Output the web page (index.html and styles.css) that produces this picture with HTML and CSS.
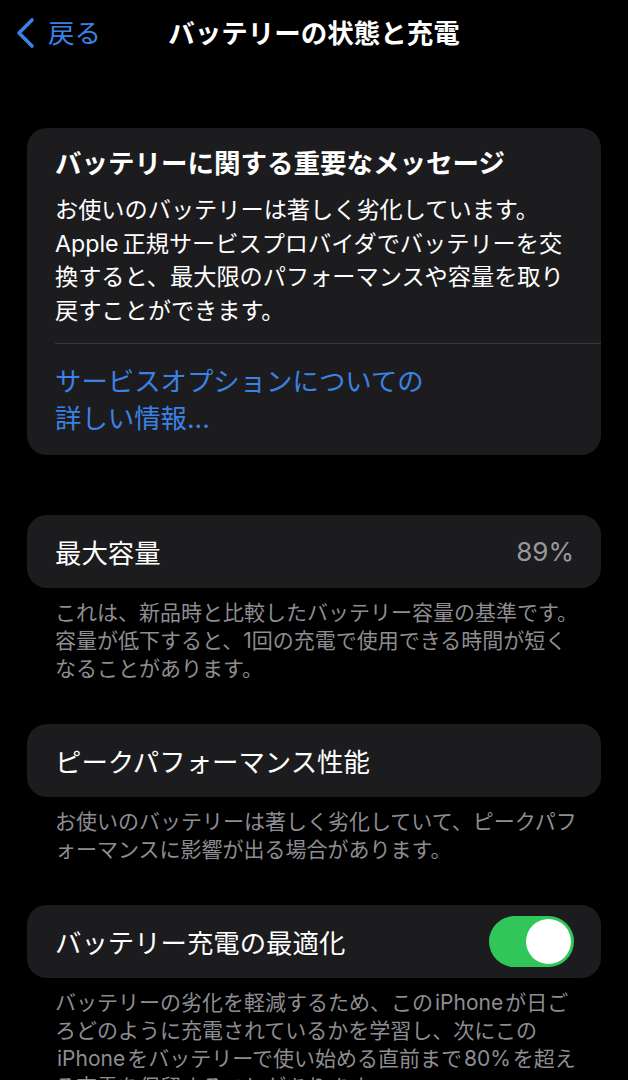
FILE: index.html
```html
<!DOCTYPE html>
<html lang="ja">
<head>
<meta charset="utf-8">
<title>バッテリーの状態と充電</title>
<link rel="stylesheet" href="styles.css">
</head>
<body>
<header class="nav">
  <a class="back">
    <svg class="chev" width="22" height="32" viewBox="0 0 22 32"><polyline points="18,3 5,16 18,29" fill="none" stroke="#3b82e4" stroke-width="3.6" stroke-linecap="round" stroke-linejoin="round"/></svg>
    <span>戻る</span>
  </a>
  <h1 class="nav-title">バッテリーの状態と充電</h1>
  <span></span>
</header>

<main class="content">
  <section class="card msg">
    <h2 class="msg-title">バッテリーに関する重要なメッセージ</h2>
    <p class="msg-body">お使いのバッテリーは著しく劣化しています。<br><span class="latin">Apple</span>正規サービスプロバイダでバッテリーを交<br>換すると、最大限のパフォーマンスや容量を取り<br>戻すことができます。</p>
    <div class="sep"></div>
    <a class="link">サービスオプションについての<br>詳しい情報...</a>
  </section>

  <section class="group g-first">
    <div class="card row"><span class="label">最大容量</span><span class="value">89%</span></div>
    <p class="footer">これは、新品時と比較したバッテリー容量の基準です。<br>容量が低下すると、1回の充電で使用できる時間が短く<br>なることがあります。</p>
  </section>

  <section class="group">
    <div class="card row"><span class="label">ピークパフォーマンス性能</span></div>
    <p class="footer">お使いのバッテリーは著しく劣化していて、ピークパフ<br>ォーマンスに影響が出る場合があります。</p>
  </section>

  <section class="group">
    <div class="card row"><span class="label">バッテリー充電の最適化</span><span class="toggle"><span class="knob"></span></span></div>
    <p class="footer">バッテリーの劣化を軽減するため、この<span class="latin-s">iPhone</span>が日ご<br>ろどのように充電されているかを学習し、次にこの<br><span class="latin-s">iPhone</span>をバッテリーで使い始める直前まで<span class="latin-s">80%</span>を超え<br>る充電を保留することがあります。</p>
  </section>
</main>
</body>
</html>
```

FILE: styles.css
```css
html, body {
  margin: 0;
  padding: 0;
  background: #000;
  color: #fff;
  font-family: Inter, "Noto Sans CJK JP", sans-serif;
}

.nav {
  height: 66px;
  display: grid;
  grid-template-columns: 1fr auto 1fr;
  align-items: center;
}

.back {
  display: flex;
  align-items: center;
  gap: 12px;
  padding-left: 14px;
  color: #3b82e4;
  font-size: 26.5px;
  line-height: 32px;
}

.nav-title {
  margin: 0;
  font-size: 26.5px;
  font-weight: 700;
  line-height: 34px;
}

.content {
  padding: 62px 27px 0;
}

.card {
  background: #1c1c1e;
  border-radius: 20px;
}

.msg {
  padding: 18px 0 18px 28px;
}

.msg-title {
  margin: 0;
  font-size: 26.5px;
  font-weight: 700;
  line-height: 34px;
}

.msg-body {
  margin: 14px 0 0;
  font-size: 23.2px;
  line-height: 33.5px;
}

.latin {
  margin-right: 4px;
}

.latin-s {
  margin: 0 2px;
}

.sep {
  height: 1px;
  background: #38383a;
  margin-top: 15px;
}

.link {
  display: block;
  margin-top: 19px;
  color: #3b82e4;
  font-size: 26.4px;
  line-height: 37px;
}

.group {
  margin-top: 41px;
}

.g-first {
  margin-top: 60px;
}

.row {
  height: 73px;
  display: flex;
  align-items: center;
  justify-content: space-between;
  padding: 0 27px 0 28px;
}

.label {
  font-size: 26.4px;
}

.value {
  font-size: 26px;
  color: #98989e;
}

.toggle {
  width: 85px;
  height: 51px;
  border-radius: 26px;
  background: #30c659;
  display: flex;
  align-items: center;
  justify-content: flex-end;
  padding: 0 3px;
  box-sizing: border-box;
}

.knob {
  width: 45px;
  height: 45px;
  border-radius: 50%;
  background: #fff;
}

.footer {
  margin: 11px 0 0;
  padding-left: 28px;
  font-size: 21px;
  line-height: 28px;
  color: #8d8d92;
}
```
